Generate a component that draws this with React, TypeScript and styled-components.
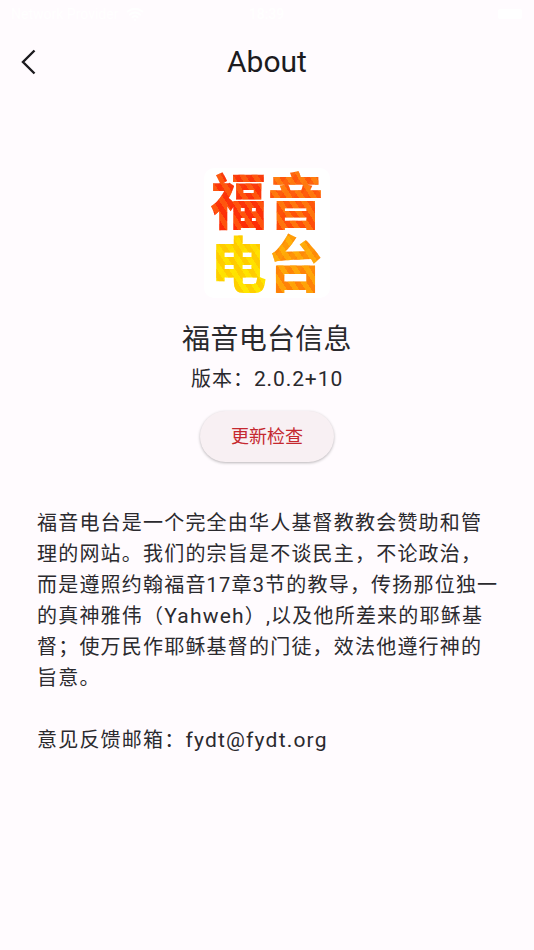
import { Wifi } from 'lucide-react'
import styled, { createGlobalStyle } from 'styled-components'

const CJK = `Roboto, "Noto Sans CJK SC", sans-serif`

const GlobalStyle = createGlobalStyle`
  html, body {
    margin: 0;
    padding: 0;
    background: #fffbfe;
  }
  * {
    box-sizing: border-box;
  }
`

const App = () => (
  <Page>
    <GlobalStyle />
    <StatusBar>
      <Carrier>
        Network Provider
        <Wifi size={18} color="#ffffff" strokeWidth={2.5} />
      </Carrier>
      <Clock>18:39</Clock>
      <Battery />
    </StatusBar>
    <NavBar>
      <BackButton aria-label="Back">
        <svg width="16" height="26" viewBox="0 0 16 26" fill="none">
          <path d="M14.5 1.5 L3 13 L14.5 24.5" stroke="#1c1b1f" strokeWidth="2.4" />
        </svg>
      </BackButton>
      <Title>About</Title>
    </NavBar>
    <Content>
      <LogoTile>
        <LogoChar $tone="red">福</LogoChar>
        <LogoChar $tone="orange">音</LogoChar>
        <LogoChar $tone="yellow">电</LogoChar>
        <LogoChar $tone="amber">台</LogoChar>
      </LogoTile>
      <AppName>福音电台信息</AppName>
      <Version>
        版本：<VersionNumber>2.0.2+10</VersionNumber>
      </Version>
      <UpdateButton>更新检查</UpdateButton>
      <Body>
        <p>
          福音电台是一个完全由华人基督教教会赞助和管理的网站。我们的宗旨是不谈民主，不论政治，而是遵照约翰福音17章3节的教导，传扬那位独一的真神雅伟（<Latin>Yahweh</Latin>）,以及他所差来的耶稣基督；使万民作耶稣基督的门徒，效法他遵行神的旨意。
        </p>
        <p>
          意见反馈邮箱：<Latin>fydt@fydt.org</Latin>
        </p>
      </Body>
    </Content>
  </Page>
)

const Page = styled.div`
  width: 534px;
  height: 950px;
  overflow: hidden;
  display: flex;
  flex-direction: column;
  background: #fffbfe;
  font-family: ${CJK};
  color: #1c1b1f;
`

const StatusBar = styled.div`
  height: 28px;
  padding: 0 12px 0 11px;
  display: grid;
  grid-template-columns: 1fr auto 1fr;
  align-items: center;
  color: #ffffff;
  font-size: 14px;
`

const Carrier = styled.div`
  display: flex;
  align-items: center;
  gap: 8px;
`

const Clock = styled.div`
  font-weight: 500;
`

const Battery = styled.div`
  justify-self: end;
  width: 24px;
  height: 10px;
  border-radius: 2px;
  background: #ffffff;
`

const NavBar = styled.div`
  height: 68px;
  display: flex;
  align-items: center;
  justify-content: center;
  position: relative;
`

const BackButton = styled.button`
  position: absolute;
  left: 20px;
  top: 21px;
  padding: 0;
  border: 0;
  background: none;
  display: flex;
`

const Title = styled.h1`
  margin: 0;
  font-size: 30px;
  font-weight: 400;
  line-height: 1;
`

const Content = styled.div`
  display: flex;
  flex-direction: column;
  align-items: center;
  padding-top: 72px;
`

const LogoTile = styled.div`
  width: 126px;
  height: 130px;
  padding: 0 6px 4px 6px;
  border-radius: 10px;
  background: #ffffff;
  display: grid;
  grid-template-columns: 1fr 1fr;
  grid-template-rows: 1fr 1fr;
  gap: 0;
`

const toneColors = {
  red: ['#f8420f', '#ff2a06', '#ff7a14'],
  orange: ['#ff6a10', '#ff4a08', '#ff9a12'],
  yellow: ['#ffd400', '#ffe800', '#ffb800'],
  amber: ['#ffa208', '#ff7d08', '#ffc30a'],
}

// the flame fill of the logo, clipped to the characters
const LogoChar = styled.div<{ $tone: keyof typeof toneColors }>`
  font-family: 'Noto Sans CJK SC', sans-serif;
  font-weight: 900;
  font-size: 56px;
  line-height: 60px;
  text-align: center;
  color: transparent;
  transform: scaleY(1.08);
  background-image:
    repeating-linear-gradient(
      55deg,
      transparent 0 5px,
      ${({ $tone }) => toneColors[$tone][2]}80 5px 10px
    ),
    repeating-linear-gradient(
      -55deg,
      transparent 0 6px,
      ${({ $tone }) => toneColors[$tone][1]}70 6px 11px
    ),
    linear-gradient(
      ${({ $tone }) => toneColors[$tone][0]},
      ${({ $tone }) => toneColors[$tone][1]}
    );
  -webkit-background-clip: text;
  background-clip: text;
`

const AppName = styled.div`
  margin-top: 22px;
  font-size: 28px;
  line-height: 40px;
  letter-spacing: 0.3px;
  color: #2a292d;
`

const Version = styled.div`
  margin-top: 4px;
  font-size: 20px;
  line-height: 30px;
  letter-spacing: 1px;
  color: #2a292d;
`

const VersionNumber = styled.span`
  font-size: 21px;
  letter-spacing: 0.9px;
`

const Latin = styled.span`
  font-size: 21px;
`

const UpdateButton = styled.button`
  margin-top: 17px;
  width: 134px;
  height: 51px;
  padding: 0 0 3px;
  border: 0;
  border-radius: 26px;
  background: #f8f0f3;
  color: #c5282f;
  font-family: ${CJK};
  font-size: 18px;
  box-shadow: 0 1px 3px rgba(0, 0, 0, 0.28);
`

const Body = styled.div`
  align-self: stretch;
  margin-top: 46px;
  padding: 0 32px 0 37px;
  font-size: 20px;
  line-height: 31px;
  letter-spacing: 1.2px;
  color: #2b2a2e;

  p {
    margin: 0 0 31px;
  }
`

export default App
